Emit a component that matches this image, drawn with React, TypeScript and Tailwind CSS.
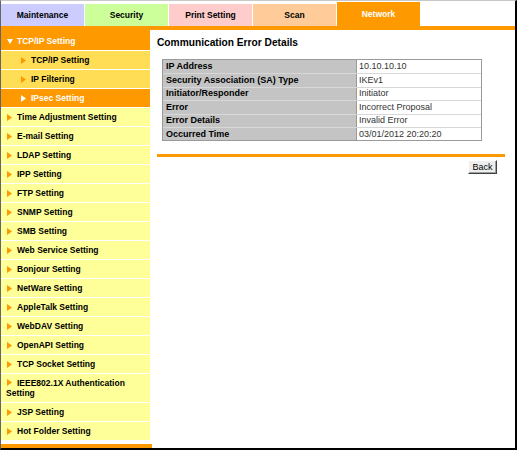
import React from "react";

const Right = ({ color }: { color: string }) => (
  <svg width="5" height="7" viewBox="0 0 5 7" className="shrink-0">
    <polygon points="0,0 5,3.5 0,7" fill={color} />
  </svg>
);

const Down = ({ color }: { color: string }) => (
  <svg width="6" height="5" viewBox="0 0 6 5" className="shrink-0">
    <polygon points="0,0 6,0 3,5" fill={color} />
  </svg>
);

const tabs = [
  { label: "Maintenance", cls: "bg-[#ccccff] text-black h-[22px]" },
  { label: "Security", cls: "bg-[#ccff99] text-black h-[22px]" },
  { label: "Print Setting", cls: "bg-[#ffcccc] text-black h-[22px]" },
  { label: "Scan", cls: "bg-[#ffcc99] text-black h-[22px]" },
  { label: "Network", cls: "bg-[#ff9900] text-white h-[24px]" },
];

const topItems = [
  "Time Adjustment Setting",
  "E-mail Setting",
  "LDAP Setting",
  "IPP Setting",
  "FTP Setting",
  "SNMP Setting",
  "SMB Setting",
  "Web Service Setting",
  "Bonjour Setting",
  "NetWare Setting",
  "AppleTalk Setting",
  "WebDAV Setting",
  "OpenAPI Setting",
  "TCP Socket Setting",
];

const rows: [string, string][] = [
  ["IP Address", "10.10.10.10"],
  ["Security Association (SA) Type", "IKEv1"],
  ["Initiator/Responder", "Initiator"],
  ["Error", "Incorrect Proposal"],
  ["Error Details", "Invalid Error"],
  ["Occurred Time", "03/01/2012 20:20:20"],
];

function TopRow({ label }: { label: string }) {
  return (
    <div className="flex items-center h-[18px] bg-[#ffff99] pl-[6px] text-[8.5px] font-bold text-black">
      <Right color="#ff9900" />
      <span className="ml-[5px] leading-[10px]">{label}</span>
    </div>
  );
}

export default function App() {
  return (
    <div className="w-[517px] h-[450px] bg-white border-l border-l-[#666666] border-t border-t-[#c8c8c8] border-r-2 border-r-black border-b-2 border-b-black flex flex-col font-['Liberation_Sans',Arial,sans-serif] overflow-hidden">
      {/* tabs */}
      <div className="flex items-end gap-px h-[25px]">
        {tabs.map((t) => (
          <div
            key={t.label}
            className={`w-[83px] flex items-center justify-center text-[8.5px] font-bold ${t.cls}`}
          >
            {t.label}
          </div>
        ))}
      </div>
      <div className="h-[4px] bg-[#ff9900]" />

      <div className="flex flex-1 min-h-0">
        {/* sidebar */}
        <div className="w-[149px] flex flex-col">
          <div className="flex flex-col gap-px">
            <div className="flex items-center h-[20px] pt-[2px] bg-[#ff9900] pl-[6px] text-[8.5px] font-bold text-white">
              <Down color="#ffffff" />
              <span className="ml-[4px] leading-[10px]">TCP/IP Setting</span>
            </div>
            <div className="flex items-center h-[18px] bg-[#ffdd55] pl-[20px] text-[8.5px] font-bold text-black">
              <Right color="#ff9900" />
              <span className="ml-[5px] leading-[10px]">TCP/IP Setting</span>
            </div>
            <div className="flex items-center h-[18px] bg-[#ffdd55] pl-[20px] text-[8.5px] font-bold text-black">
              <Right color="#ff9900" />
              <span className="ml-[5px] leading-[10px]">IP Filtering</span>
            </div>
            <div className="flex items-center h-[18px] bg-[#ff9900] pl-[20px] text-[8.5px] font-bold text-white">
              <Right color="#ffffff" />
              <span className="ml-[5px] leading-[10px]">IPsec Setting</span>
            </div>
            {topItems.map((l) => (
              <TopRow key={l} label={l} />
            ))}
            <div className="bg-[#ffff99] pl-[5px] pr-[4px] py-[4px] text-[8.5px] leading-[10px] font-bold text-black">
              <span className="inline-block ml-px mr-[5px] align-[0px]">
                <Right color="#ff9900" />
              </span>
              IEEE802.1X Authentication Setting
            </div>
            <TopRow label="JSP Setting" />
            <TopRow label="Hot Folder Setting" />
          </div>
          <div className="mt-auto h-[4px] bg-[#ff9900] w-[151px]" />
        </div>

        {/* main */}
        <div className="flex-1 flex flex-col pt-[7px] pl-[7px] pr-[10px]">
          <div className="text-[10.2px] leading-[12px] font-bold text-black">
            Communication Error Details
          </div>
          <div className="ml-[5px] mt-[10px] w-[320px] border border-[#9a9a9a]">
            {rows.map(([k, v], i) => (
              <div
                key={k}
                className={`flex h-[13.4px] ${i > 0 ? "border-t border-t-[#d8d8d8]" : ""}`}
              >
                <div className="w-[194px] bg-[#c4c4c4] border-r border-r-[#9a9a9a] pl-[3px] text-[9px] font-bold text-black leading-[13px] flex items-center">
                  {k}
                </div>
                <div className="flex-1 pl-[2px] text-[9px] text-[#333333] leading-[13px] flex items-center">
                  {v}
                </div>
              </div>
            ))}
          </div>
          <div className="mt-[13px] h-[3px] bg-[#ff9900]" />
          <div className="flex justify-end pr-[8px] mt-[3px]">
            <button className="w-[29px] h-[14px] bg-[#eeeeee] border border-t-white border-l-white border-r-[#404040] border-b-[#404040] shadow-[inset_-1px_-1px_0_#a0a0a0] text-[9px] leading-[10px] text-black flex items-center justify-center p-0">
              Back
            </button>
          </div>
        </div>
      </div>
    </div>
  );
}
